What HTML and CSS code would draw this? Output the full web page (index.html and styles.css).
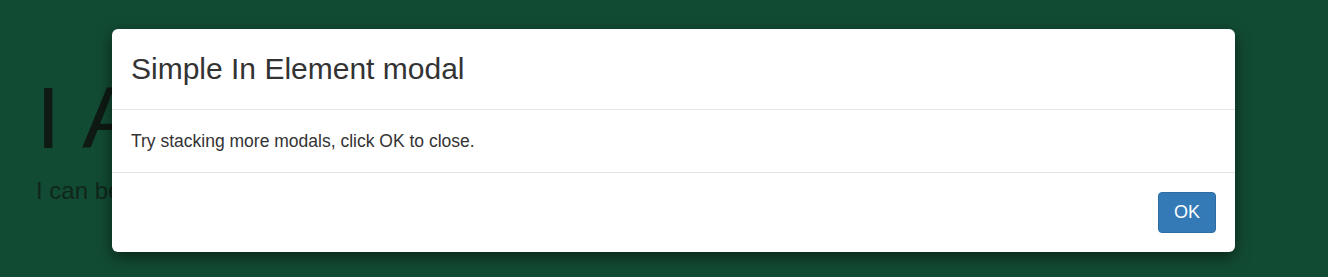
FILE: index.html
```html
<!DOCTYPE html>
<html>
<head>
<meta charset="utf-8">
<link rel="stylesheet" href="styles.css">
</head>
<body>
<div class="page">
  <div class="jumbo">
    <h1 class="jumbo-title">I Am In Element</h1>
    <p class="jumbo-sub">I can be a modal container</p>
  </div>
  <div class="modal">
    <div class="modal-header">
      <h4 class="modal-title">Simple In Element modal</h4>
    </div>
    <div class="modal-body">Try stacking more modals, click OK to close.</div>
    <div class="modal-footer">
      <button class="btn">OK</button>
    </div>
  </div>
</div>
</body>
</html>
```
FILE: styles.css
```css
html, body {
  margin: 0;
  padding: 0;
}
body {
  background: #124b33;
  font-family: "Liberation Sans", Arial, sans-serif;
  color: #333;
  width: 1328px;
  height: 277px;
  overflow: hidden;
}
.page {
  position: relative;
  height: 277px;
}
.jumbo {
  padding: 70px 0 0 36px;
  color: #0f1a14;
}
.jumbo-title {
  margin: 0;
  font-weight: 400;
  font-size: 88px;
  line-height: 96px;
  letter-spacing: 1px;
}
.jumbo-sub {
  margin: 10px 0 0 0;
  font-size: 24px;
  line-height: 30px;
  color: #10261b;
}
.modal {
  position: absolute;
  left: 112px;
  top: 29px;
  width: 1123px;
  height: 223px;
  background: #fff;
  border-radius: 6px;
  box-shadow: 0 5px 15px rgba(0, 0, 0, 0.5);
  display: flex;
  flex-direction: column;
}
.modal-header {
  height: 80px;
  flex: none;
  border-bottom: 1px solid #e5e5e5;
  display: flex;
  align-items: center;
  padding: 0 19px;
}
.modal-title {
  margin: 0;
  font-size: 30px;
  font-weight: 400;
  color: #333;
  line-height: 34px;
}
.modal-body {
  height: 62px;
  flex: none;
  border-bottom: 1px solid #e5e5e5;
  display: flex;
  align-items: center;
  padding: 0 19px;
  font-size: 17.5px;
  color: #333;
}
.modal-footer {
  flex: 1;
  display: flex;
  justify-content: flex-end;
  align-items: center;
  padding: 0 19px;
}
.btn {
  width: 58px;
  height: 41px;
  background: #337ab7;
  border: 1px solid #2e6da4;
  border-radius: 4px;
  color: #fff;
  font-family: "Liberation Sans", Arial, sans-serif;
  font-size: 18px;
  padding: 0;
}
```
